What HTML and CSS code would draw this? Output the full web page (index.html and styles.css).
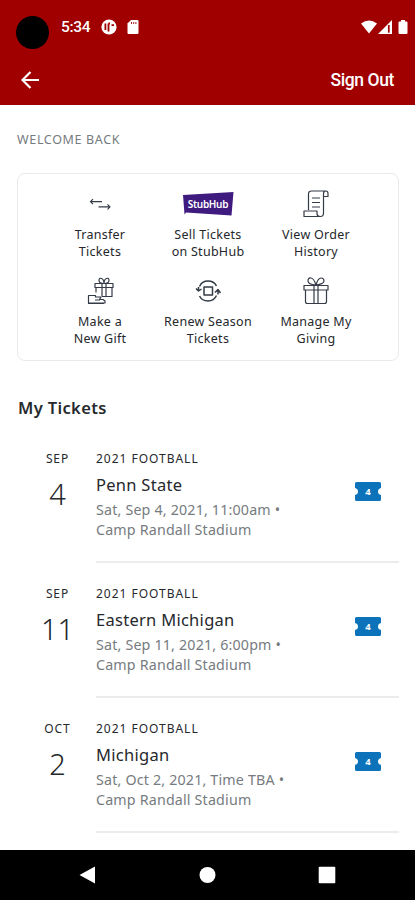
FILE: index.html
```
<!DOCTYPE html>
<html lang="en">
<head>
<meta charset="utf-8">
<title>My Tickets</title>
<meta name="viewport" content="width=device-width, initial-scale=1">
<link rel="stylesheet" href="styles.css">
</head>
<body>
<header class="header">
  <div class="status">
    <span class="camera"></span>
    <span class="clock">5:34</span>
    <svg class="app-dot" width="16" height="16" viewBox="0 0 16 16"><circle cx="8" cy="8" r="7.6" fill="#fff"/><path d="M4.400 4.500v6.500M7.500 12.500V4.500M7.500 4.500h1.500M10.500 6.200h2.500" fill="none" stroke="#a00000" stroke-width="1.8"/></svg>
    <svg class="sd" width="12" height="14" viewBox="0 0 12 14"><path d="M4 0h6.500Q11.500 0 11.500 1v12q0 1-1 1h-9q-1 0-1-1V3.500z" fill="#fff"/><path d="M4.500 2v2M6.700 2v2M8.900 2v2" stroke="#a00000" stroke-width=".9"/></svg>
    <span class="spacer"></span>
    <svg width="16" height="14" viewBox="0 0 16 14"><path d="M0 3.500Q8-2.500 16 3.500L8 13.500z" fill="#fff"/></svg>
    <svg class="signal" width="14" height="14" viewBox="0 0 14 14"><path d="M0 14L14 0v14z" fill="#fff"/><path d="M10.800 5v7.700" stroke="#a00000" stroke-width="1.700"/></svg>
    <svg class="battery" width="10" height="14" viewBox="0 0 10 14"><path d="M3 0h4v1.500h1.500q1 0 1 1V13q0 1-1 1h-7q-1 0-1-1V2.500q0-1 1-1H3z" fill="#fff"/></svg>
  </div>
  <div class="appbar">
    <svg width="18" height="18" viewBox="0 0 18 18" fill="none" stroke="#fff" stroke-width="2.200"><path d="M18 9H1.800M9.500 1L1.500 9l8 8"/></svg>
    <span class="signout">Sign Out</span>
  </div>
</header>
<main class="content">
  <p class="welcome">WELCOME BACK</p>
  <nav class="actions">
    <div class="action">
      <svg width="28" height="28" viewBox="0 0 28 28" class="line-icon"><path d="M16 11.700H4.500M7 9.200l-2.500 2.500L7 14.200M12.500 16.800H24M21.500 14.300l2.500 2.500-2.500 2.500"/></svg>
      <span>Transfer<br>Tickets</span>
    </div>
    <div class="action">
      <svg width="52" height="28" viewBox="0 0 52 28"><path d="M1 5L51.500 2 49.500 25.500 4 22.500 2.500 24.500z" fill="#3f1b80"/><text x="26" y="17.500" class="stubhub">StubHub</text></svg>
      <span>Sell Tickets<br>on StubHub</span>
    </div>
    <div class="action">
      <svg width="28" height="28" viewBox="0 0 28 28" class="line-icon"><path d="M6.500 20V4q0-3 3-3H24q2 0 2 2.500v3h-4.500M21.500 6.500V4q0-3 2.500-3M21.500 6.500V23q0 3.500-3 3.500H2V21h13v2.500q0 3 3 3M10 8h8M10 12.500h8M10 17h8"/></svg>
      <span>View Order<br>History</span>
    </div>
    <div class="action">
      <svg width="28" height="28" viewBox="0 0 28 28" class="line-icon"><path d="M9 6.500h18v4H9zM10 10.500v5M26 10.500v9H16M16 6.500v13M20 6.500v13M18 6.500q-5 0-5-3t2.500-2 2.500 5q0-4 2.500-5t2.500 2-5 3M2.500 18.500h7v1.500h5.500l-1.500 2.500H17l2 1.500v2H2.500zM9 23h5M2 26.500h16"/></svg>
      <span>Make a<br>New Gift</span>
    </div>
    <div class="action">
      <svg width="28" height="28" viewBox="0 0 28 28" class="line-icon heavy"><path d="M5.500 9.500Q8 4 14 4t8.500 5M4.500 10v3.500M2 11.500l2.500 2.500L7.500 12M22.500 18.500Q20 24 14 24t-8.500-5M24 17.500v-4M21 15.500l3-3 2.500 3.500M10 10h8.500v8H10z"/></svg>
      <span>Renew Season<br>Tickets</span>
    </div>
    <div class="action">
      <svg width="28" height="28" viewBox="0 0 28 28" class="line-icon"><path d="M2 8.500h24V13H2zM3.500 13v11.500q0 2 2 2h17q2 0 2-2V13M12 8.500v18M16 8.500v18M14 8Q6 7.500 6 4t3-3 5 7q2-7 5-7t3 3-8 4"/></svg>
      <span>Manage My<br>Giving</span>
    </div>
  </nav>
  <h1 class="title">My Tickets</h1>
  <section class="tickets">
    <article class="ticket">
      <div class="date"><span class="month">SEP</span><span class="day">4</span></div>
      <div class="event">
        <div class="info"><p class="season">2021 FOOTBALL</p><h2 class="name">Penn State</h2><p class="meta">Sat, Sep 4, 2021, 11:00am •<br>Camp Randall Stadium</p></div>
        <svg class="badge" width="26" height="19" viewBox="0 0 26 19"><path d="M1.500 0h23Q26 0 26 1.500V6q-3 .5-3 3.500t3 3.500v4.500q0 1.500-1.500 1.500h-23Q0 19 0 17.500V13q3-.5 3-3.500T0 6V1.500Q0 0 1.500 0z"/><text x="13" y="13">4</text></svg>
      </div>
    </article>
    <article class="ticket">
      <div class="date"><span class="month">SEP</span><span class="day">11</span></div>
      <div class="event">
        <div class="info"><p class="season">2021 FOOTBALL</p><h2 class="name">Eastern Michigan</h2><p class="meta">Sat, Sep 11, 2021, 6:00pm •<br>Camp Randall Stadium</p></div>
        <svg class="badge" width="26" height="19" viewBox="0 0 26 19"><path d="M1.500 0h23Q26 0 26 1.500V6q-3 .5-3 3.500t3 3.500v4.500q0 1.500-1.500 1.500h-23Q0 19 0 17.500V13q3-.5 3-3.500T0 6V1.500Q0 0 1.500 0z"/><text x="13" y="13">4</text></svg>
      </div>
    </article>
    <article class="ticket">
      <div class="date"><span class="month">OCT</span><span class="day">2</span></div>
      <div class="event">
        <div class="info"><p class="season">2021 FOOTBALL</p><h2 class="name">Michigan</h2><p class="meta">Sat, Oct 2, 2021, Time TBA •<br>Camp Randall Stadium</p></div>
        <svg class="badge" width="26" height="19" viewBox="0 0 26 19"><path d="M1.500 0h23Q26 0 26 1.500V6q-3 .5-3 3.500t3 3.500v4.500q0 1.500-1.500 1.500h-23Q0 19 0 17.500V13q3-.5 3-3.500T0 6V1.500Q0 0 1.500 0z"/><text x="13" y="13">4</text></svg>
      </div>
    </article>
  </section>
</main>
<footer class="navbar">
  <svg width="18" height="18" viewBox="0 0 18 18"><path d="M1.500 9L17 .5v17z"/></svg>
  <svg width="18" height="18" viewBox="0 0 18 18"><circle cx="9.500" cy="9" r="8"/></svg>
  <svg width="18" height="18" viewBox="0 0 18 18"><rect x=".7" y=".7" width="16.600" height="16.600" rx="1"/></svg>
</footer>
</body>
</html>
```
FILE: styles.css
```
* { box-sizing: border-box; }
body {
  margin: 0;
  height: 900px;
  display: flex;
  flex-direction: column;
  overflow: hidden;
  background: #fff;
  color: #25282c;
  font-family: "Noto Sans", "Open Sans", sans-serif;
}
p, h1, h2 { margin: 0; }
svg { display: block; flex: none; }

.header { height: 105px; background: #a00000; color: #fff; font-family: Roboto, sans-serif; }
.status { height: 54px; padding: 0 7px 0 16px; display: flex; align-items: center; }
.camera { width: 33px; height: 33px; margin-top: 10px; border-radius: 50%; background: #000; }
.clock { margin-left: 12px; width: 28px; font-size: 15.5px; font-weight: 500; letter-spacing: -.3px; white-space: nowrap; }
.app-dot { margin-left: 12px; }
.sd { margin-left: 10px; }
.spacer { flex: 1; }
.signal { margin-left: 1px; }
.battery { margin-left: 6px; }
.appbar { height: 51px; padding: 0 21px 0 21px; display: flex; align-items: center; justify-content: space-between; }
.signout { font-size: 17.5px; font-weight: 500; letter-spacing: -.4px; }

.content { flex: 1; padding: 25px 16px 0 17px; }
.welcome { height: 20px; line-height: 20px; font-size: 12.5px; letter-spacing: .65px; color: #767b80; }
.actions {
  height: 188px;
  margin-top: 23px;
  padding: 16px 28px 0;
  display: grid;
  grid-template-columns: repeat(3, 108px);
  grid-auto-rows: 87px;
  border: 1px solid #e9e9e9;
  border-radius: 8px;
}
.action { display: flex; flex-direction: column; align-items: center; gap: 8px; text-align: center; font-size: 12.5px; line-height: 17px; letter-spacing: .27px; font-weight: 450; white-space: nowrap; }
.line-icon { fill: none; stroke: #343b46; stroke-width: 1.2; stroke-linejoin: round; }
.heavy { stroke-width: 1.5; }
.stubhub { font: 600 10px "Noto Sans", sans-serif; letter-spacing: -.3px; text-anchor: middle; fill: #fff; }

.title { margin-top: 35px; padding-left: 1px; height: 24px; font-size: 16.5px; line-height: 24px; font-weight: 600; letter-spacing: .35px; }
.tickets { margin-top: 8px; }
.ticket { height: 135px; display: flex; }
.date { width: 79px; padding: 22px 0 0 2px; display: flex; flex-direction: column; align-items: center; }
.month { height: 18px; font-size: 12px; line-height: 18px; font-weight: 450; letter-spacing: .9px; }
.day { font-size: 29px; line-height: 52px; font-weight: 300; }
.event { flex: 1; display: flex; justify-content: space-between; padding: 22px 18px 0 0; border-bottom: 2px solid #ececec; }
.season { line-height: 18px; font-size: 12px; font-weight: 450; letter-spacing: .98px; }
.name { margin-top: 5px; line-height: 24px; font-size: 16.5px; font-weight: 450; letter-spacing: .28px; }
.meta { margin-top: 3px; line-height: 20px; font-size: 14.25px; letter-spacing: .18px; color: #767b80; }
.badge { margin-top: 32px; fill: #0c73bb; }
.badge text { font: 700 9.5px "Noto Sans", sans-serif; text-anchor: middle; fill: #fff; }

.navbar { height: 50px; padding: 0 79px 0 78px; display: flex; align-items: center; justify-content: space-between; background: #000; fill: #fff; }
```
